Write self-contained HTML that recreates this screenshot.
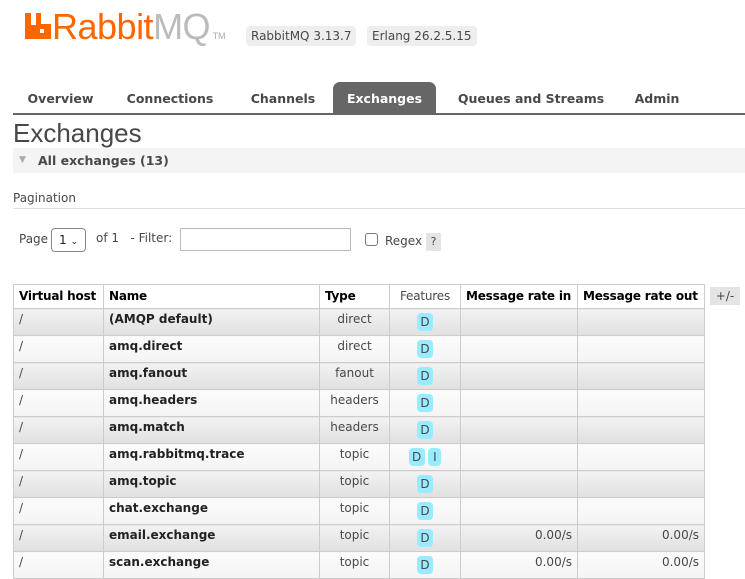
<!DOCTYPE html>
<html><head><meta charset="utf-8"><style>
*{box-sizing:border-box}
body{margin:0;width:745px;height:574px;overflow:hidden;background:#fff;font-family:"DejaVu Sans",Verdana,sans-serif;color:#484848;position:relative}
.abs{position:absolute}
.badge{position:absolute;top:26px;height:20px;background:#eee;border-radius:4px;font-size:12px;line-height:20px;padding:0 5px;color:#484848;white-space:nowrap}
.tabs{position:absolute;top:82px;left:13px;width:732px;height:33px;border-bottom:2px solid #666}
.tab{position:absolute;top:0;height:32px;font-size:12.5px;font-weight:bold;line-height:33px;text-align:center;color:#484848;white-space:nowrap}
.tab.act{background:#666;color:#fff;border-radius:7px 7px 0 0}
table{position:absolute;left:13px;top:284px;border-collapse:collapse;font-size:12px;table-layout:fixed;width:691px}
td,th{border:1px solid #ccc;padding:0 5px;vertical-align:top;white-space:nowrap;overflow:hidden}
th{height:24px;text-align:left;font-weight:bold;color:#000;line-height:22px;letter-spacing:-0.2px}
th.n{font-weight:normal;color:#484848;text-align:center}
td{height:27px;line-height:20px;color:#484848}
td.b{font-weight:bold;color:#222}
td.c{text-align:center}
td.r{text-align:right}
tr.o td{background:linear-gradient(#f2f2f2,#e0e0e0)}
tr.e td{background:linear-gradient(#fbfbfb,#f4f4f4)}
.d{display:inline-block;background:#99ebff;border-radius:4px;width:16px;height:18px;line-height:19px;text-align:center;margin-top:4px;font-size:12px;color:#484848}
</style></head><body>
<svg class="abs" style="left:25px;top:13px" width="26" height="26" viewBox="0 0 26 26"><path d="M0 0H6V12H11V0H16V11H26V26H0Z M15 16V20H19V16Z" fill="#f60" fill-rule="evenodd"/></svg>
<div class="abs" style="left:52px;top:7px;font-family:'Liberation Sans',sans-serif;font-size:36px;line-height:40px;color:#f60;letter-spacing:-0.5px">Rabbit<span style="color:#bbb">MQ</span><span style="font-size:9px;color:#aaa;letter-spacing:0">&nbsp;TM</span></div>
<div class="badge" style="left:246px">RabbitMQ 3.13.7</div>
<div class="badge" style="left:367px">Erlang 26.2.5.15</div>
<div class="tabs">
<div class="tab" style="left:0;width:95px">Overview</div>
<div class="tab" style="left:105px;width:104px">Connections</div>
<div class="tab" style="left:230px;width:80px">Channels</div>
<div class="tab act" style="left:320px;width:103px">Exchanges</div>
<div class="tab" style="left:442px;width:152px">Queues and Streams</div>
<div class="tab" style="left:614px;width:60px">Admin</div>
</div>
<div class="abs" style="left:13px;top:118px;font-family:'Liberation Sans',sans-serif;font-size:26px;color:#484848">Exchanges</div>
<div class="abs" style="left:13px;top:148px;width:732px;height:25px;background:#f4f4f4;font-size:12.5px;font-weight:bold;line-height:25px;padding-left:25px;color:#484848"><span style="position:absolute;left:6px;top:0;color:#aaa;font-size:9px">▼</span>All exchanges (13)</div>
<div class="abs" style="left:13px;top:191px;font-size:12px;color:#484848">Pagination</div>
<div class="abs" style="left:13px;top:208px;width:732px;border-top:1px solid #ddd"></div>
<div class="abs" style="left:19px;top:232px;font-size:12px">Page</div>
<div class="abs" style="left:51px;top:228px;width:35px;height:24px;border:1px solid #888;border-radius:4px;font-size:12px;line-height:22px;padding-left:7px;color:#222">1 <span style="font-size:9px">⌄</span></div>
<div class="abs" style="left:96px;top:231px;font-size:12px">of 1&nbsp;&nbsp; - Filter:</div>
<div class="abs" style="left:180px;top:228px;width:171px;height:23px;border:1px solid #bbb"></div>
<div class="abs" style="left:365px;top:233px;width:13px;height:13px;border:1px solid #777;border-radius:3px"></div>
<div class="abs" style="left:385px;top:234px;font-size:12px">Regex</div>
<div class="abs" style="left:426px;top:233px;width:15px;height:18px;background:#e4e4e4;font-size:11px;text-align:center;line-height:18px">?</div>
<div class="abs" style="left:710px;top:287px;width:30px;height:18px;background:#e4e4e4;font-size:12px;text-align:center;line-height:18px">+/-</div>
<table>
<colgroup><col style="width:90px"><col style="width:216px"><col style="width:70px"><col style="width:71px"><col style="width:117px"><col style="width:127px"></colgroup>
<tr><th>Virtual host</th><th>Name</th><th>Type</th><th class="n">Features</th><th>Message rate in</th><th>Message rate out</th></tr>
<tr class="o"><td>/</td><td class="b">(AMQP default)</td><td class="c">direct</td><td class="c"><span class="d">D</span></td><td></td><td></td></tr>
<tr class="e"><td>/</td><td class="b">amq.direct</td><td class="c">direct</td><td class="c"><span class="d">D</span></td><td></td><td></td></tr>
<tr class="o"><td>/</td><td class="b">amq.fanout</td><td class="c">fanout</td><td class="c"><span class="d">D</span></td><td></td><td></td></tr>
<tr class="e"><td>/</td><td class="b">amq.headers</td><td class="c">headers</td><td class="c"><span class="d">D</span></td><td></td><td></td></tr>
<tr class="o"><td>/</td><td class="b">amq.match</td><td class="c">headers</td><td class="c"><span class="d">D</span></td><td></td><td></td></tr>
<tr class="e"><td>/</td><td class="b">amq.rabbitmq.trace</td><td class="c">topic</td><td class="c"><span class="d">D</span> <span class="d" style="width:13px">I</span></td><td></td><td></td></tr>
<tr class="o"><td>/</td><td class="b">amq.topic</td><td class="c">topic</td><td class="c"><span class="d">D</span></td><td></td><td></td></tr>
<tr class="e"><td>/</td><td class="b">chat.exchange</td><td class="c">topic</td><td class="c"><span class="d">D</span></td><td></td><td></td></tr>
<tr class="o"><td>/</td><td class="b">email.exchange</td><td class="c">topic</td><td class="c"><span class="d">D</span></td><td class="r">0.00/s</td><td class="r">0.00/s</td></tr>
<tr class="e"><td>/</td><td class="b">scan.exchange</td><td class="c">topic</td><td class="c"><span class="d">D</span></td><td class="r">0.00/s</td><td class="r">0.00/s</td></tr>
</table>
</body></html>
